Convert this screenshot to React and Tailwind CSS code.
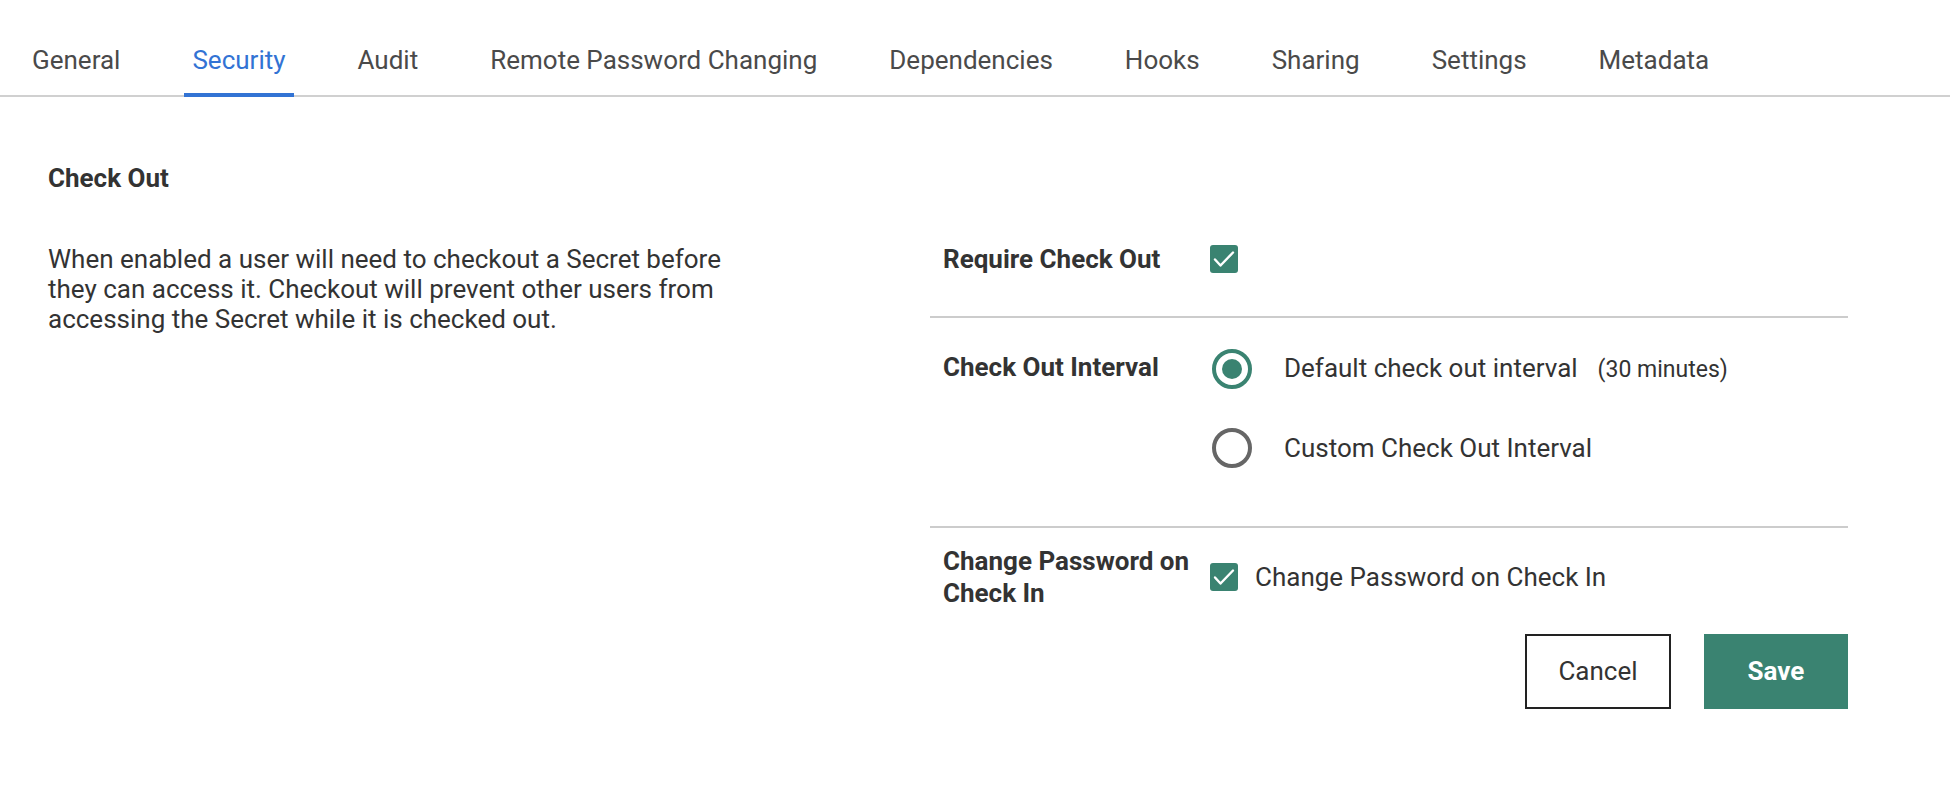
import React from "react";

const tabs = ["General", "Security", "Audit", "Remote Password Changing", "Dependencies", "Hooks", "Sharing", "Settings", "Metadata"];

function Check() {
  return (
    <span className="flex h-[28px] w-[28px] shrink-0 items-center justify-center rounded-[3px] bg-[#3a8371]">
      <svg width="28" height="28" viewBox="0 0 28 28" fill="none">
        <path d="M5 14.5 L10.5 20.5 L23 7.5" stroke="white" strokeWidth="2.4" strokeLinecap="round" strokeLinejoin="round" />
      </svg>
    </span>
  );
}

export default function App() {
  return (
    <div className="min-h-[790px] bg-white text-[#333] font-['Roboto',sans-serif]">
      <nav className="flex gap-[56px] border-b-2 border-[#d0d0d0] pl-[24px] pt-[44px]">
        {tabs.map((t) => (
          <div
            key={t}
            className={
              "-mb-[2px] px-[8px] pb-[17px] text-[26px] leading-[32px] " +
              (t === "Security" ? "border-b-4 border-[#3273d4] text-[#3273d4]" : "border-b-4 border-transparent text-[#4a4a4a]")
            }
          >
            {t}
          </div>
        ))}
      </nav>

      <div className="flex pl-[48px] pr-[102px]">
        <div className="w-[882px] shrink-0">
          <h2 className="mt-[66px] text-[26px] font-bold leading-[30px]">Check Out</h2>
          <p className="mt-[51px] w-[700px] text-[26px] leading-[30px]">
            When enabled a user will need to checkout a Secret before they can access it. Checkout will prevent other users from accessing the Secret while it is checked out.
          </p>
        </div>

        <div className="flex-1 pt-[147px]">
          <div className="flex border-b-2 border-[#cccccc] pb-[42px] pl-[13px]">
            <div className="w-[267px] shrink-0 text-[26px] font-bold leading-[30px]">Require Check Out</div>
            <div className="pt-[1px]"><Check /></div>
          </div>

          <div className="flex border-b-2 border-[#cccccc] pb-[58px] pl-[13px] pt-[34px]">
            <div className="w-[267px] shrink-0 text-[26px] font-bold leading-[30px]">Check Out Interval</div>
            <div className="-mt-[3px] flex flex-col gap-[39px] pl-[2px]">
              <div className="flex items-center gap-[32px]">
                <span className="flex h-[40px] w-[40px] items-center justify-center rounded-full border-4 border-[#3a8371]">
                  <span className="h-[20px] w-[20px] rounded-full bg-[#3a8371]"></span>
                </span>
                <span className="text-[26px] leading-[30px]">
                  Default check out interval
                  <span className="ml-[20px] text-[23px]">(30 minutes)</span>
                </span>
              </div>
              <div className="flex items-center gap-[32px]">
                <span className="h-[40px] w-[40px] rounded-full border-4 border-[#666666]"></span>
                <span className="text-[26px] leading-[30px]">Custom Check Out Interval</span>
              </div>
            </div>
          </div>

          <div className="flex items-center pl-[13px] pt-[17px]">
            <div className="w-[267px] shrink-0 pr-[10px] text-[26px] font-bold leading-[32px]">Change Password on Check In</div>
            <div className="flex items-center gap-[17px]">
              <Check />
              <span className="text-[26px] leading-[30px]">Change Password on Check In</span>
            </div>
          </div>

          <div className="mt-[25px] flex justify-end gap-[33px]">
            <button className="h-[75px] w-[146px] border-2 border-[#222] bg-white text-[26px] text-[#333]">Cancel</button>
            <button className="h-[75px] w-[144px] bg-[#3a8371] text-[26px] font-bold text-white">Save</button>
          </div>
        </div>
      </div>
    </div>
  );
}
